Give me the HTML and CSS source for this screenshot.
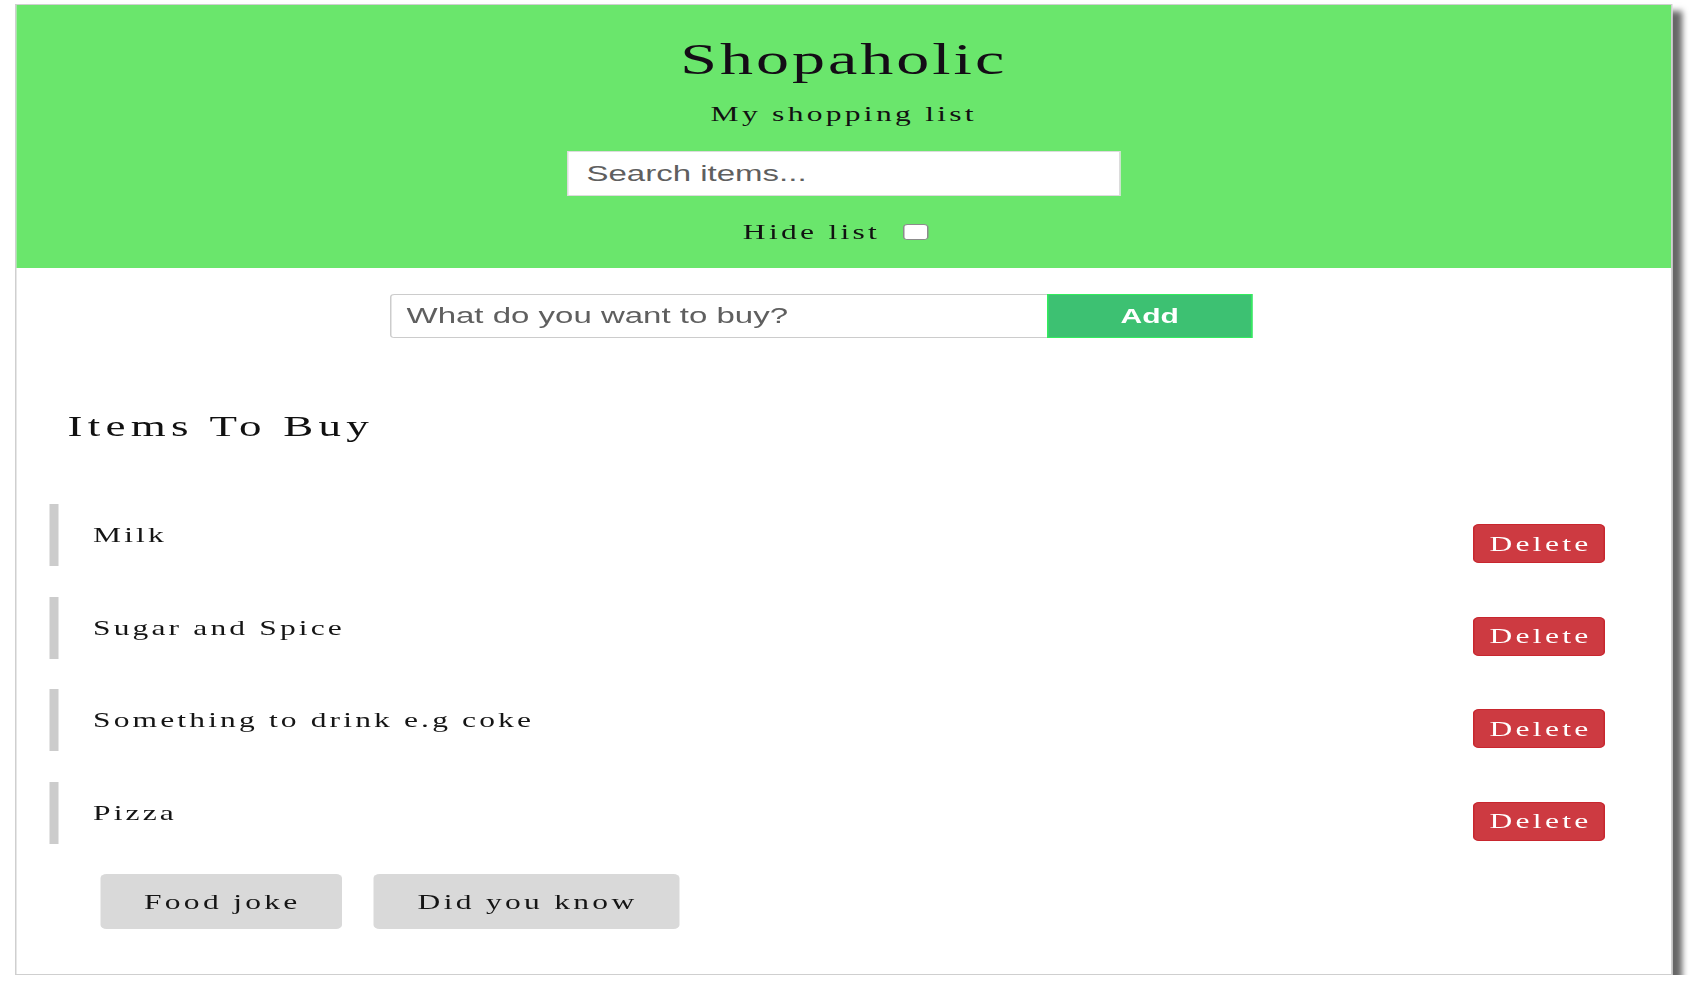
FILE: index.html
```html
<!DOCTYPE html>
<html lang="en">
<head>
<meta charset="utf-8">
<title>Shopaholic</title>
<link rel="stylesheet" href="styles.css">
</head>
<body>
<div class="stretch">
  <div class="app">
    <header class="hero">
      <h1 class="title">Shopaholic</h1>
      <p class="subtitle">My shopping list</p>
      <input class="search" type="text" placeholder="Search items...">
      <div class="hide-row">
        <label class="hide-label" for="hide">Hide list</label>
        <input class="hide-box" id="hide" type="checkbox">
      </div>
    </header>

    <form class="add-form">
      <input class="add-input" type="text" placeholder="What do you want to buy?">
      <button class="add-btn" type="button">Add</button>
    </form>

    <section class="list">
      <h2 class="list-title">Items To Buy</h2>
      <ul class="items">
        <li class="item"><span class="item-name">Milk</span><button class="delete" type="button">Delete</button></li>
        <li class="item"><span class="item-name">Sugar and Spice</span><button class="delete" type="button">Delete</button></li>
        <li class="item"><span class="item-name">Something to drink e.g coke</span><button class="delete" type="button">Delete</button></li>
        <li class="item"><span class="item-name">Pizza</span><button class="delete" type="button">Delete</button></li>
      </ul>
      <div class="extras">
        <button class="extra-btn" type="button">Food joke</button>
        <button class="extra-btn" type="button">Did you know</button>
      </div>
    </section>
  </div>
</div>
</body>
</html>
```

FILE: styles.css
```css
* {
  box-sizing: border-box;
}

html, body {
  margin: 0;
  padding: 0;
  background: #ffffff;
  overflow: hidden;
}

body {
  font-family: "Liberation Serif", "Times New Roman", serif;
  color: #1a1a1a;
}

/* The reference is horizontally stretched 1.5x */
.stretch {
  width: 1134px;
  padding: 4px 0 0 10px;
  transform: scaleX(1.5);
  transform-origin: 0 0;
}

.app {
  width: 1105px;
  border: 1px solid #cfcfcf;
  background: #ffffff;
  box-shadow: 7px 7px 5px rgba(0, 0, 0, 0.6);
  padding-bottom: 45px;
}

/* Header */
.hero {
  background: #6ae66c;
  padding: 29px 0 24px;
  display: flex;
  flex-direction: column;
  align-items: center;
}

.title {
  margin: 0;
  font-size: 44px;
  line-height: 52px;
  font-weight: normal;
  letter-spacing: 2px;
  color: #140c16;
}

.subtitle {
  margin: 16px 0 0;
  font-size: 21px;
  line-height: 24px;
  letter-spacing: 2.2px;
  color: #111111;
}

.search {
  margin-top: 25px;
  width: 369px;
  height: 45px;
  border: 1px solid #dcdcdc;
  background: #ffffff;
  padding: 0 12px;
  font-family: "Liberation Sans", Arial, sans-serif;
  font-size: 22px;
  color: #555555;
  outline: none;
}

.search::placeholder,
.add-input::placeholder {
  color: #5f5f5f;
}

.hide-row {
  margin-top: 24px;
  height: 24px;
  display: flex;
  align-items: center;
  gap: 15px;
  padding-right: 11px;
}

.hide-label {
  font-size: 21px;
  line-height: 24px;
  letter-spacing: 2.2px;
  color: #111111;
}

.hide-box {
  appearance: none;
  -webkit-appearance: none;
  margin: 0;
  width: 17px;
  height: 16px;
  border: 1px solid #8c8c8c;
  border-radius: 3px;
  background: #ffffff;
}

/* Add form */
.add-form {
  margin: 26px 0 0;
  display: flex;
  justify-content: center;
  padding-right: 30px;
}

.add-input {
  width: 438px;
  height: 44px;
  border: 1px solid #cccccc;
  border-right: none;
  border-radius: 3px 0 0 3px;
  padding: 0 10px;
  font-family: "Liberation Sans", Arial, sans-serif;
  font-size: 22px;
  color: #555555;
  outline: none;
}

.add-btn {
  width: 137px;
  height: 44px;
  margin: 0;
  border: 1px solid #33ec5e;
  background: #3dc172;
  color: #ffffff;
  font-family: "Liberation Sans", Arial, sans-serif;
  font-size: 20px;
  font-weight: bold;
  padding: 0;
}

/* List */
.list {
  padding: 0 44px 0 22px;
}

.list-title {
  margin: 71px 0 0 12px;
  font-size: 30px;
  line-height: 34px;
  font-weight: normal;
  letter-spacing: 3.5px;
  color: #111111;
}

.items {
  list-style: none;
  margin: 61px 0 0;
  padding: 0;
  display: flex;
  flex-direction: column;
  gap: 30.5px;
}

.item {
  height: 62px;
  border-left: 6px solid #cccccc;
  padding-left: 23px;
  display: flex;
  justify-content: space-between;
  align-items: center;
}

.item-name {
  font-size: 21px;
  line-height: 24px;
  letter-spacing: 2.1px;
  color: #151515;
}

.delete {
  align-self: flex-end;
  margin: 0 0 3px;
  height: 39px;
  padding: 0 8px 0 10.5px;
  border: 1px solid #c8262e;
  border-radius: 4px;
  background: #cd3a41;
  color: #ffffff;
  font-family: "Liberation Serif", "Times New Roman", serif;
  font-size: 21px;
  line-height: 24px;
  letter-spacing: 2.2px;
}

.extras {
  margin-top: 30.5px;
  padding-left: 34px;
  display: flex;
  gap: 21px;
}

.extra-btn {
  height: 55px;
  padding: 0 28px 0 29px;
  border: none;
  border-radius: 4px;
  background: #d9d9d9;
  color: #151515;
  font-family: "Liberation Serif", "Times New Roman", serif;
  font-size: 21px;
  line-height: 24px;
  letter-spacing: 2.2px;
}
```
